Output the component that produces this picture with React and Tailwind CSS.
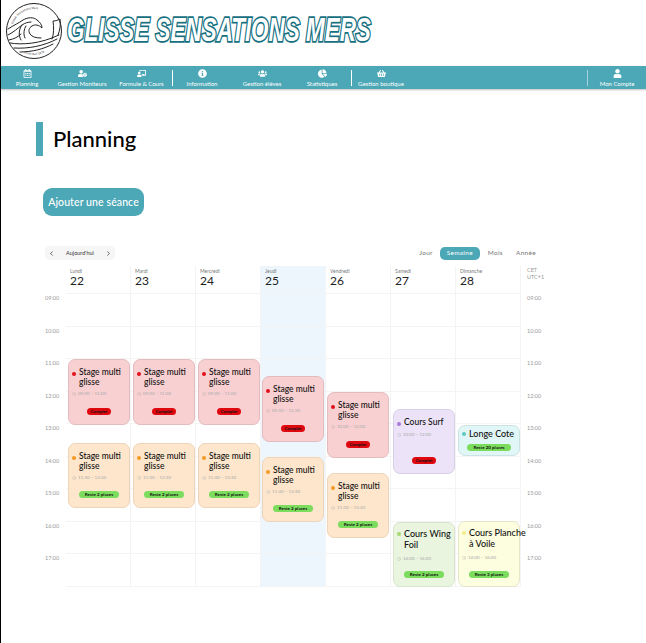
import { ChevronLeft, ChevronRight, Clock } from "lucide-react";
import { FaChalkboardTeacher, FaChartPie, FaInfoCircle, FaRegCalendarAlt, FaShoppingBasket, FaUser, FaUserCog, FaUsers } from "react-icons/fa";

const hours = ["09:00", "10:00", "11:00", "12:00", "13:00", "14:00", "15:00", "16:00", "17:00"];

const navLeft = [
    { label: "Planning", icon: FaRegCalendarAlt, w: "w-[52px]" },
    { label: "Gestion Moniteurs", icon: FaUserCog, w: "w-[58px]" },
    { label: "Formule & Cours", icon: FaChalkboardTeacher, w: "w-[61px]" },
    { sep: true },
    { label: "Information", icon: FaInfoCircle, w: "w-[58px]" },
    { label: "Gestion élèves", icon: FaUsers, w: "w-[62px]" },
    { label: "Statistiques", icon: FaChartPie, w: "w-[58px]" },
    { sep: true },
    { label: "Gestion boutique", icon: FaShoppingBasket, w: "w-[58px]" },
];

const red = { box: "bg-[#f9d0d2] border-[#e3bcc0]", dot: "bg-[#e0101c]" };
const orange = { box: "bg-[#fde6cc] border-[#ecd5b8]", dot: "bg-[#f59a23]" };
const purple = { box: "bg-[#ece3f8] border-[#d8d0e4]", dot: "bg-[#a77bd6]" };
const cyan = { box: "bg-[#e1f6f6] border-[#cde2e2]", dot: "bg-[#5cc8c4]" };
const green = { box: "bg-[#e9f5df] border-[#d8e4ce]", dot: "bg-[#a5d672]" };
const yellow = { box: "bg-[#fdfde0] border-[#e6e6cc]", dot: "bg-[#f2ee8a]" };

const STAGE = "Stage multi\nglisse";
const COMPLET = "Complet";
const RESTE2 = "Reste 2 places";

const days = [
    {
        name: "Lundi",
        num: 22,
        events: [
            { ...red, pos: "left-[2px] top-[65px] h-[66px]", title: STAGE, time: "09:00 – 11:00", badge: COMPLET },
            { ...orange, pos: "left-[2px] top-[149px] h-[65px]", title: STAGE, time: "11:30 – 13:30", badge: RESTE2 },
        ],
    },
    {
        name: "Mardi",
        num: 23,
        events: [
            { ...red, pos: "left-[2px] top-[65px] h-[66px]", title: STAGE, time: "09:00 – 11:00", badge: COMPLET },
            { ...orange, pos: "left-[2px] top-[149px] h-[65px]", title: STAGE, time: "11:30 – 13:30", badge: RESTE2 },
        ],
    },
    {
        name: "Mercredi",
        num: 24,
        events: [
            { ...red, pos: "left-[2px] top-[65px] h-[66px]", title: STAGE, time: "09:00 – 11:00", badge: COMPLET },
            { ...orange, pos: "left-[2px] top-[149px] h-[65px]", title: STAGE, time: "11:30 – 13:30", badge: RESTE2 },
        ],
    },
    {
        name: "Jeudi",
        num: 25,
        today: true,
        events: [
            { ...red, pos: "left-[1px] top-[82px] h-[66px]", title: STAGE, time: "09:30 – 11:30", badge: COMPLET },
            { ...orange, pos: "left-[1px] top-[163px] h-[65px]", title: STAGE, time: "11:30 – 13:30", badge: RESTE2 },
        ],
    },
    {
        name: "Vendredi",
        num: 26,
        events: [
            { ...red, pos: "left-[1px] top-[98px] h-[66px]", title: STAGE, time: "10:00 – 12:00", badge: COMPLET },
            { ...orange, pos: "left-[1px] top-[179px] h-[65px]", title: STAGE, time: "11:30 – 13:30", badge: RESTE2 },
        ],
    },
    {
        name: "Samedi",
        num: 27,
        events: [
            { ...purple, pos: "left-[2px] top-[115px] h-[65px]", title: "Cours Surf", time: "10:00 – 12:00", badge: COMPLET },
            { ...green, pos: "left-[2px] top-[228px] h-[65px]", title: "Cours Wing\nFoil", time: "14:00 – 16:00", badge: RESTE2, large: true },
        ],
    },
    {
        name: "Dimanche",
        num: 28,
        events: [
            { ...cyan, pos: "left-[2px] top-[131px] h-[31px]", title: "Longe Cote", badge: "Reste 20 places", large: true },
            { ...yellow, pos: "left-[2px] top-[227px] h-[66px]", title: "Cours Planche\nà Voile", time: "14:00 – 16:00", badge: "Reste 3 places", large: true },
        ],
    },
];

const fontMain = "font-['Lato','Liberation_Sans',sans-serif]";

const Logo = () => (
    <svg viewBox="0 0 58 58" className="w-[58px] h-[58px] shrink-0">
        <defs>
            <path id="ring-top" d="M7 29a22 22 0 0 1 44 0" />
            <path id="ring-bottom" d="M5 29a24 24 0 0 0 48 0" />
        </defs>
        <circle cx="29" cy="29" r="27.5" fill="#fff" stroke="#222" strokeWidth="1" />
        <text fontSize="3" fill="#444" fontFamily="Liberation Sans, sans-serif">
            <textPath href="#ring-top" startOffset="10%">Glisse Sensations Mers</textPath>
        </text>
        <text fontSize="3" fill="#444" fontFamily="Liberation Sans, sans-serif">
            <textPath href="#ring-bottom" startOffset="36%">Ecole Surf 1973</textPath>
        </text>
        <g fill="none" stroke="#222" strokeWidth="1" strokeLinecap="round" strokeLinejoin="round">
            <path d="M3 27c6-4 11-6 15-9 5-3 11-3 14 0 3 2 5 5 5 8-3-3-7-4-10-2-3 1.500-4 5-2 8 2 3 6 4 11 4" />
            <path d="M3 33c6-3 10-7 14-10 3-2 6-3 9-3" />
            <path d="M4 38c5-1 9-3 12-6M17 23c-3 4-4 10-1 15" />
            <path d="M21 24c-2 3-3 8-1 12" />
            <path d="M5 41c12 2 30 1 49-8" />
            <path d="M9 46c14 1 30-2 43-9" />
            <path d="M15 50c12 0 24-3 33-8" />
            <path d="M47 37c2-5 2-12 1-18 3 0 5-1 7-2 1 5 0 11-2 16" />
        </g>
    </svg>
);

const EventCard = ({ event }) => {
    const hasTime = Boolean(event.time);
    const topPad = !hasTime ? "pt-[2px] pb-[4px]" : event.large ? "pt-[5px] pb-[8px]" : "pt-[8px] pb-[9px]";
    return (
        <div className={`absolute w-[62px] ${event.pos} ${event.box} border rounded-[7px] flex flex-col px-[3px] ${topPad}`}>
            <div className="flex items-start gap-[3.500px]">
                <span className={`w-[3.500px] h-[3.500px] mt-[4px] shrink-0 rounded-full ${event.dot}`} />
                <p className={`${event.large ? "text-[9px] leading-[11px]" : "text-[8.500px] leading-[9.500px]"} text-[#111] font-medium whitespace-pre`}>
                    {event.title}
                </p>
            </div>
            {hasTime && (
                <div className={`flex items-center gap-[2px] ${event.large ? "mt-[6px]" : "mt-[4px]"} text-[#aaa] text-[4.500px] leading-[6px]`}>
                    <Clock size={4} strokeWidth={1.500} />
                    <span>{event.time}</span>
                </div>
            )}
            <div className="mt-auto flex justify-center">
                <span
                    className={`rounded-full text-[#111] text-[4.500px] leading-[7px] font-bold ${event.badge === COMPLET ? "bg-[#e0080f] px-[3px]" : "bg-[#7bdc5e] px-[6px]"}`}
                >
                    {event.badge}
                </span>
            </div>
        </div>
    );
};

const HourLines = () => (
    <div className="absolute inset-0 flex flex-col">
        {hours.map((h) => (
            <div key={h} className="h-[32.500px] border-b border-[#f4f4f4] shrink-0" />
        ))}
    </div>
);

const App = () => {
    return (
        <div className={`${fontMain} w-[646px] h-[643px] bg-white border-l border-black overflow-hidden`}>
            <header className="h-[66px] flex items-start pl-[4px] pt-[2px]">
                <Logo />
                <h1 className="ml-[4px] mt-[8px] text-[34px] leading-[38px] italic font-extrabold uppercase text-white whitespace-nowrap font-['Liberation_Sans',sans-serif] [-webkit-text-stroke:3.500px_#17707f] [paint-order:stroke_fill] scale-x-[0.66] origin-left">
                    Glisse Sensations Mers
                </h1>
            </header>

            <nav className="h-[23px] bg-[#4ca8b6] shadow-[0_1px_2px_rgba(0,0,0,0.25)] flex items-center text-white">
                {navLeft.map((item, i) =>
                    item.sep ? (
                        <span key={i} className="w-px h-[16px] bg-white shrink-0" />
                    ) : (
                        <div key={item.label} className={`${item.w} shrink-0 flex flex-col items-center gap-[2px]`}>
                            <item.icon size={9} />
                            <span className="text-[6px] leading-[7px] whitespace-nowrap">{item.label}</span>
                        </div>
                    )
                )}
                <span className="ml-auto w-px h-[16px] bg-[#a5d3da] shrink-0" />
                <div className="w-[58px] shrink-0 flex flex-col items-center gap-[2px]">
                    <FaUser size={9} />
                    <span className="text-[6px] leading-[7px] whitespace-nowrap">Mon Compte</span>
                </div>
            </nav>

            <main className="pl-[35px] pt-[33px]">
                <div className="flex items-center h-[34px]">
                    <span className="w-[7px] h-[34px] bg-[#4ca8b6]" />
                    <h2 className="ml-[10px] text-[22px] leading-[30px] font-medium text-black">Planning</h2>
                </div>

                <button className="mt-[32px] ml-[7px] w-[101px] h-[28px] pt-[2px] rounded-[9px] bg-[#4ca8b6] text-white text-[10.500px] font-medium tracking-[0.1px]">
                    Ajouter une séance
                </button>

                <div className="mt-[30px] ml-[9px] w-[491px] h-[14px] flex items-center justify-between">
                    <div className="w-[70px] h-[14px] px-[3px] rounded-[4px] bg-[#f6f6f6] flex items-center justify-between text-[#333] text-[5.500px]">
                        <ChevronLeft size={7} strokeWidth={2.500} />
                        <span>Aujourd&apos;hui</span>
                        <ChevronRight size={7} strokeWidth={2.500} />
                    </div>
                    <div className="flex items-center text-[#777] text-[6.500px] font-normal tracking-[0.3px]">
                        <span>Jour</span>
                        <span className="ml-[7px] w-[40px] h-[13px] rounded-[5px] bg-[#4ca8b6] text-white flex items-center justify-center">Semaine</span>
                        <span className="ml-[8px]">Mois</span>
                        <span className="ml-[13px]">Année</span>
                    </div>
                </div>

                <div className="mt-[6px] flex text-[#999]">
                    <div className="w-[31px] shrink-0 -ml-[1px]">
                        <div className="h-[28px]" />
                        {hours.map((h) => (
                            <div key={h} className="h-[32.500px] pl-[10px] text-[5.500px] leading-[8px] whitespace-nowrap">
                                {h}
                            </div>
                        ))}
                    </div>
                    <div className="flex">
                        {days.map((day) => (
                            <div key={day.num} className={`w-[65px] shrink-0 border-r border-[#f4f4f4] ${day.today ? "bg-[#edf5fd]" : ""}`}>
                                <div className="h-[28px] pl-[4px] pt-[2px] border-b border-[#f4f4f4]">
                                    <div className="text-[#777] text-[5px] leading-[6px]">{day.name}</div>
                                    <div className="text-[#222] text-[12px] leading-[14px]">{day.num}</div>
                                </div>
                                <div className="relative h-[292.500px]">
                                    <HourLines />
                                    {day.events.map((event) => (
                                        <EventCard key={event.pos} event={event} />
                                    ))}
                                </div>
                            </div>
                        ))}
                    </div>
                    <div className="pl-[6px] text-[5.500px]">
                        <div className="h-[28px] leading-[7px] pt-[1px]">
                            CET
                            <br />
                            UTC+1
                        </div>
                        {hours.map((h) => (
                            <div key={h} className="h-[32.500px] leading-[8px]">
                                {h}
                            </div>
                        ))}
                    </div>
                </div>
            </main>
        </div>
    );
};

export default App;
